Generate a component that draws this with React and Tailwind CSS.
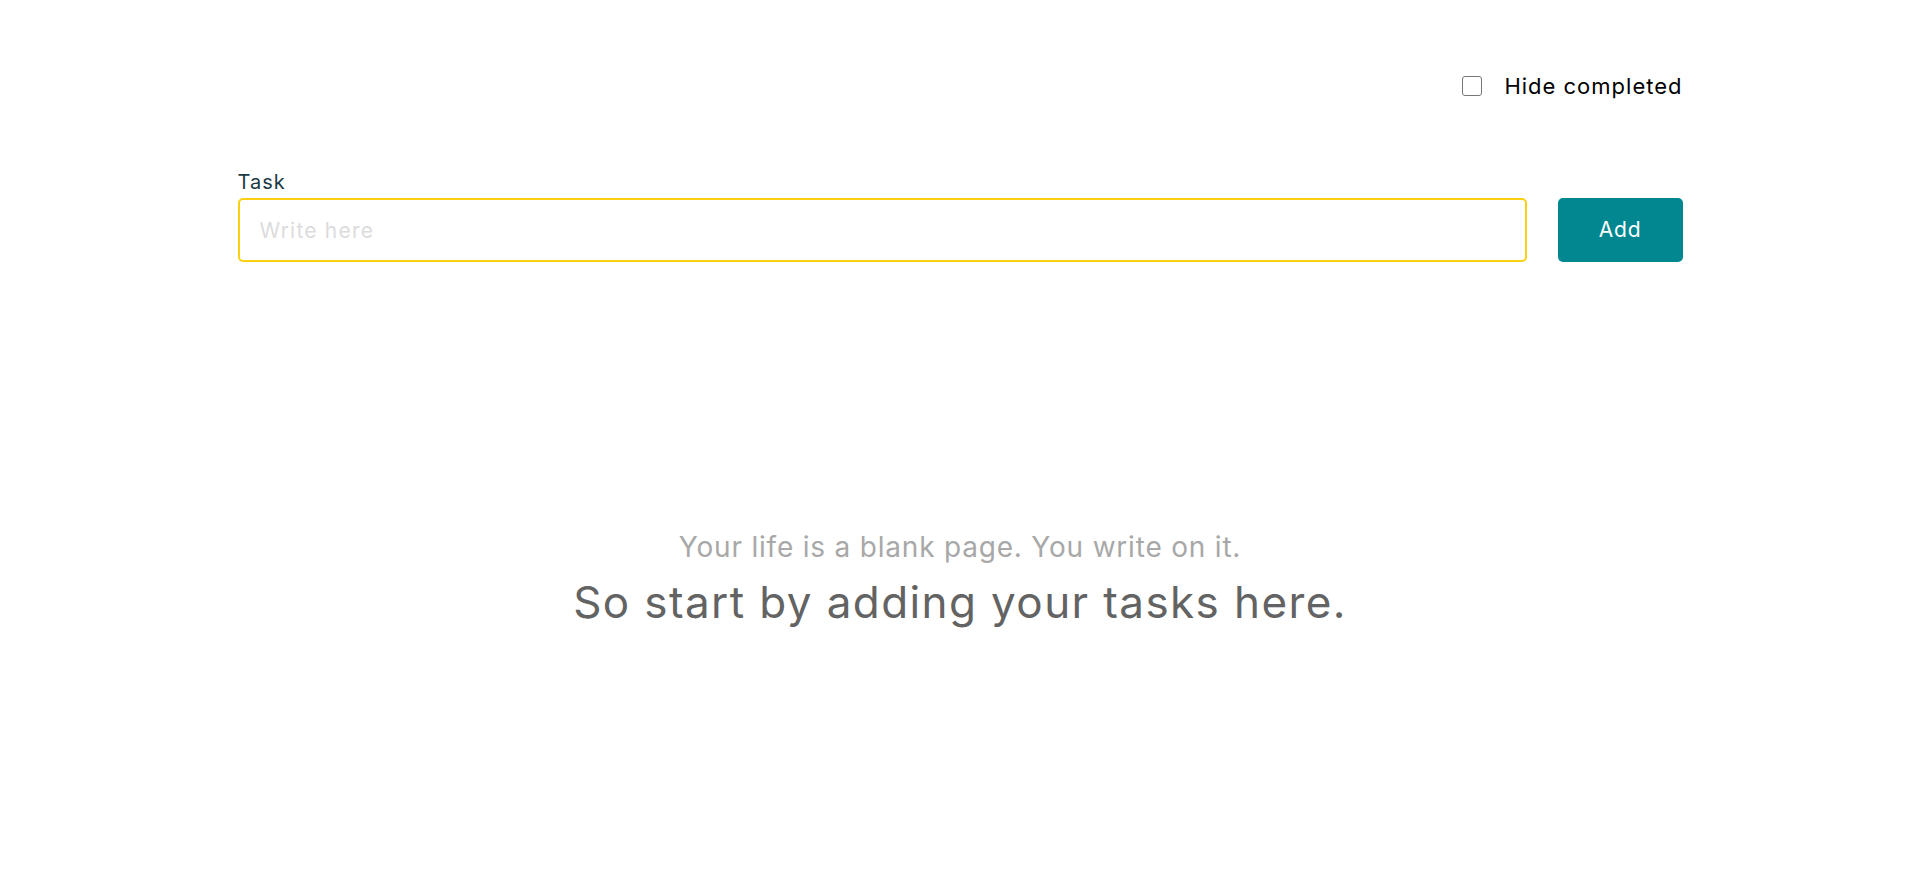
import React, { useState } from "react";

const App = () => {
  const [hideCompleted, setHideCompleted] = useState(false);
  const [task, setTask] = useState("");

  return (
    <div className="min-h-screen bg-white" style={{ fontFamily: "Inter, 'Noto Sans', sans-serif" }}>
      <div className="w-[1445px] mx-auto">
        {/* top bar */}
        <div className="flex justify-end items-center pt-[71px] h-[101px]">
          <label className="flex items-center gap-[22px] cursor-pointer">
            <input
              type="checkbox"
              checked={hideCompleted}
              onChange={(e) => setHideCompleted(e.target.checked)}
              className="appearance-none w-[20px] h-[20px] border-[1.5px] border-[#767676] rounded-[3px] bg-white"
            />
            <span className="text-[22px] text-black leading-[30px] tracking-[1px]">Hide completed</span>
          </label>
        </div>

        {/* task form */}
        <div className="mt-[67px]">
          <label className="block text-[20px] leading-[28px] text-[#1b3a44] mb-[2px] tracking-[1px]">Task</label>
          <div className="flex gap-[31px]">
            <input
              type="text"
              value={task}
              onChange={(e) => setTask(e.target.value)}
              placeholder="Write here"
              className="flex-1 h-[64px] border-2 border-[#fcd012] rounded-[5px] pl-[20px] text-[21px] tracking-[1.2px] outline-none placeholder:text-[#dcdcdc]"
            />
            <button className="w-[125px] h-[64px] bg-[#018790] text-white text-[21px] tracking-[0.8px] rounded-[5px]">
              Add
            </button>
          </div>
        </div>

        {/* empty state */}
        <div className="mt-[267px] text-center">
          <p className="text-[28px] leading-[36px] text-[#a8a8a8] tracking-[0.8px]">Your life is a blank page. You write on it.</p>
          <p className="text-[44px] leading-[58px] text-[#636363] mt-[8px] tracking-[1.4px]">So start by adding your tasks here.</p>
        </div>
      </div>
    </div>
  );
};

export default App;
